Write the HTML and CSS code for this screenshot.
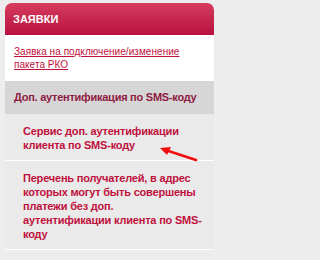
FILE: index.html
```html
<!DOCTYPE html>
<html lang="ru">
<head>
<meta charset="utf-8">
<link rel="stylesheet" href="styles.css">
</head>
<body>
<div class="panel">
  <div class="panel-head">ЗАЯВКИ</div>
  <div class="panel-link">
    <a href="#">Заявка на подключение/изменение пакета РКО</a>
  </div>
  <div class="panel-group">Доп. аутентификация по SMS-коду</div>
  <ul class="submenu">
    <li class="sub-item">Сервис доп. аутентификации клиента по SMS-коду</li>
    <li class="sub-item">Перечень получателей, в адрес которых могут быть совершены платежи без доп.<br>аутентификации клиента по SMS-коду</li>
  </ul>
  <svg class="arrow" width="50" height="20" viewBox="0 0 50 20">
    <line x1="38" y1="15" x2="9" y2="5.5" stroke="#f20d0d" stroke-width="2.6" stroke-linecap="round"/>
    <polygon points="2,3 13,2 9,10" fill="#f20d0d"/>
  </svg>
</div>
</body>
</html>
```
FILE: styles.css
```css
html, body {
  margin: 0;
  padding: 0;
}
body {
  background: #ededed;
  font-family: "Liberation Sans", Arial, sans-serif;
  font-size: 11px;
}
.panel {
  position: relative;
  width: 209px;
  margin: 3px 0 0 5px;
}
.panel-head {
  height: 32px;
  line-height: 32px;
  padding-left: 8px;
  border-radius: 7px 7px 0 0;
  background: linear-gradient(#d63d5e, #b8113f);
  color: #fff;
  font-weight: bold;
}
.panel-link {
  background: #fff;
  padding: 10px 9px 10px 9px;
  line-height: 13px;
  font-size: 10px;
  letter-spacing: 0.05px;
}
.panel-link a {
  color: #c2103d;
  text-decoration: underline;
}
.panel-group {
  background: #d6d6d6;
  padding: 10px 9px;
  line-height: 13px;
  font-weight: bold;
  letter-spacing: -0.25px;
  color: #8e1b42;
}
.submenu {
  list-style: none;
  margin: 0;
  padding: 0;
  background: #eaeaea;
}
.sub-item {
  padding: 10px 9px 8px 18px;
  line-height: 14px;
  font-weight: bold;
  letter-spacing: -0.2px;
  color: #c0113d;
  border-bottom: 1px solid #fff;
}
.arrow {
  position: absolute;
  left: 153px;
  top: 142px;
}
```
